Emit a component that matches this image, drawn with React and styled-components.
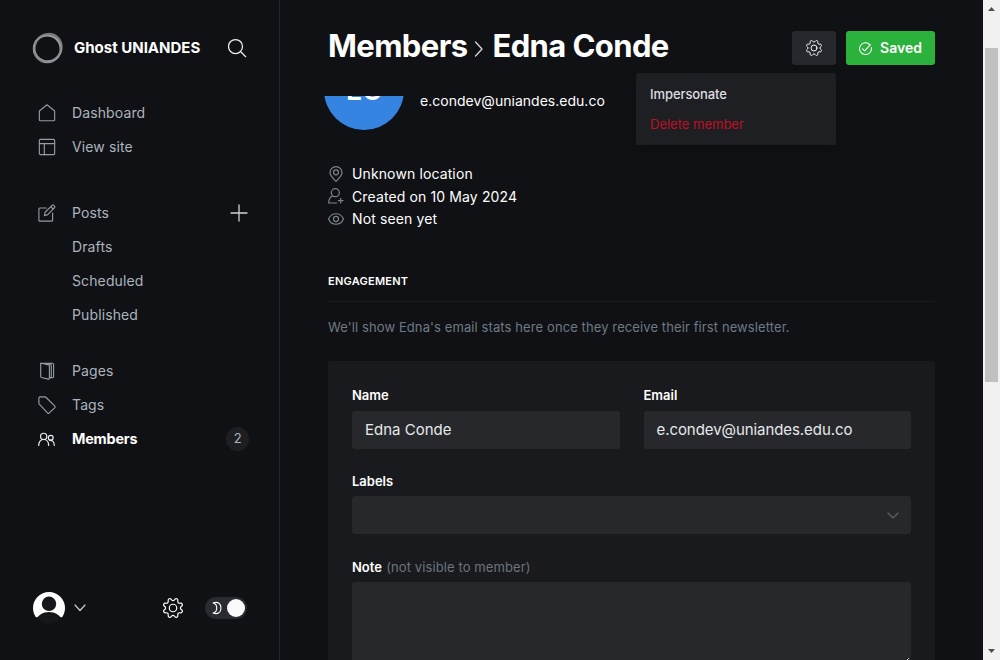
import React from "react";
import styled, { createGlobalStyle, css } from "styled-components";

const Global = createGlobalStyle`
  *, *::before, *::after { box-sizing: border-box; }
  body { margin: 0; background: #101114; font-family: Inter, "Liberation Sans", sans-serif; color: #fff; overflow: hidden; }
  h1, h2, p, ul { margin: 0; padding: 0; }
  button { font: inherit; color: inherit; border: 0; background: none; padding: 0; }
  svg { display: block; flex: none; }
`;

const Shell = styled.div`
  display: flex;
  width: 1000px;
  height: 660px;
  overflow: hidden;
`;

const Sidebar = styled.nav`
  display: flex;
  flex-direction: column;
  flex: none;
  width: 280px;
  padding: 31px 30px 35px 32px;
  border-right: 1px solid #24262b;
`;

const Brand = styled.div`
  display: flex;
  align-items: center;
  height: 34px;
  margin-bottom: 31px;
`;

const BrandName = styled.div`
  flex: 1;
  margin-left: 10px;
  padding-bottom: 1px;
  font-size: 15px;
  font-weight: 700;
  white-space: nowrap;
`;

const NavGroup = styled.ul`
  list-style: none;
  margin-bottom: ${(p) => p.$gap}px;
`;

const NavRow = styled.li`
  display: flex;
  align-items: center;
  height: 34px;
  padding-left: 6px;
  font-size: ${(p) => (p.$active ? 14.4 : 14)}px;
  color: ${(p) => (p.$active ? "#fff" : "#abb4be")};
  font-weight: ${(p) => (p.$active ? 700 : 400)};
  letter-spacing: ${(p) => (p.$active ? "-0.18px" : "0.12px")};
`;

const NavIcon = styled.span`
  width: 34px;
  color: ${(p) => (p.$active ? "#e8eaec" : "#959ca4")};
`;

const NavLabel = styled.span`
  flex: 1;
  padding-bottom: 1px;
`;

const Count = styled.span`
  display: grid;
  place-items: center;
  width: 23px;
  height: 24px;
  padding-bottom: 2px;
  border-radius: 12px;
  background: #1d1e22;
  color: #abb4be;
  font-size: 13px;
  font-weight: 400;
`;

const SidebarFooter = styled.div`
  display: flex;
  align-items: center;
  height: 34px;
  margin-top: auto;
`;

const UserButton = styled.button`
  display: flex;
  align-items: center;
  gap: 9px;
  margin-right: auto;
`;

const Toggle = styled.div`
  display: flex;
  align-items: center;
  justify-content: space-between;
  width: 42px;
  height: 22px;
  margin-left: 22px;
  margin-right: 2px;
  padding: 0 2px 0 7px;
  border-radius: 11px;
  background: #2a2b30;
`;

const Knob = styled.span`
  width: 18px;
  height: 18px;
  border-radius: 50%;
  background: #fafafa;
`;

const Main = styled.main`
  display: flex;
  flex-direction: column;
  flex: 1;
  min-width: 0;
  padding: 0 48px;
`;

const PageHeader = styled.header`
  display: flex;
  align-items: center;
  flex: none;
  height: 96px;
  gap: 10px;
`;

const Title = styled.h1`
  display: flex;
  align-items: center;
  flex: 1;
  padding-bottom: 5px;
  font-size: 31px;
  font-weight: 700;
  letter-spacing: -0.6px;
  white-space: nowrap;
  svg { margin: 7px 9px 0 7px; }
`;

const ActionButton = styled.button`
  display: flex;
  align-items: center;
  justify-content: center;
  gap: 8px;
  width: ${(p) => (p.$primary ? 89 : 44)}px;
  height: 34px;
  border-radius: 3px;
  background: ${(p) => (p.$primary ? "#2ab23c" : "#27282d")};
  font-size: 14px;
  font-weight: 600;
  span { padding-bottom: 1px; }
`;

const MenuAnchor = styled.div`
  position: relative;
`;

const Menu = styled.ul`
  position: absolute;
  z-index: 2;
  top: 42px;
  right: 0;
  width: 200px;
  padding: 6px 0;
  border-radius: 3px;
  background: #1e1f23;
  box-shadow: 0 4px 16px rgba(0, 0, 0, 0.2);
  list-style: none;
`;

const MenuItem = styled.li`
  height: 30px;
  padding-left: 14px;
  font-size: 13px;
  line-height: 30px;
  letter-spacing: ${(p) => (p.$danger ? "0" : "-0.08px")};
  font-weight: ${(p) => (p.$danger ? 400 : 500)};
  color: ${(p) => (p.$danger ? "#be0f24" : "#dcdee0")};
`;

const Content = styled.div`
  flex: 1;
  min-height: 0;
  margin: 0 -8px;
  padding: 0 8px;
  overflow: hidden;
`;

const Profile = styled.section`
  display: flex;
  gap: 16px;
  margin: -46px 0 32.5px -4px;
`;

const Initials = styled.div`
  display: grid;
  place-items: center;
  width: 80px;
  height: 80px;
  border-radius: 50%;
  background: #3684e2;
  font-size: 27px;
  font-weight: 600;
`;

const ProfileEmail = styled.p`
  margin-top: 46px;
  font-size: 14px;
  line-height: 10px;
  letter-spacing: 0.02px;
`;

const Facts = styled.ul`
  list-style: none;
`;

const Fact = styled.li`
  display: flex;
  align-items: center;
  gap: 8px;
  height: 22.5px;
  font-size: 14px;
  letter-spacing: 0.12px;
  svg { color: #7c858e; }
`;

const SectionTitle = styled.h2`
  height: 28px;
  margin-top: 43.5px;
  border-bottom: 1px solid #1a1c20;
  font-size: 11px;
  font-weight: 600;
  line-height: 14px;
  letter-spacing: 0.25px;
  text-transform: uppercase;
`;

const EmptyText = styled.p`
  padding: 15px 0 24px;
  font-size: 13px;
  line-height: 20px;
  letter-spacing: 0.1px;
  color: #6d7a85;
`;

const Form = styled.section`
  display: grid;
  grid-template-columns: 1fr 1fr;
  column-gap: 24px;
  padding: 24px;
  border-radius: 3px;
  background: #191a1d;
`;

const Field = styled.div`
  grid-column: ${(p) => (p.$wide ? "1 / -1" : "auto")};
  margin-bottom: ${(p) => (p.$wide ? 23 : 22)}px;
`;

const Label = styled.div`
  height: ${(p) => p.$h}px;
  padding-top: 2px;
  font-size: 13px;
  font-weight: 600;
  line-height: 16px;
`;

const Hint = styled.span`
  margin-left: 1px;
  color: #6b747e;
  font-weight: 400;
  letter-spacing: 0.1px;
`;

const control = css`
  display: flex;
  align-items: center;
  border-radius: 3px;
  background: #27282c;
  color: #e6e9eb;
`;

const Input = styled.div`
  ${control}
  height: 38px;
  padding: 0 13px;
  font-size: 15px;
  letter-spacing: ${(p) => p.$spacing || "0"};
`;

const Select = styled(Input)`
  justify-content: flex-end;
  padding-top: 2px;
  padding-right: 12px;
  color: #5e6168;
`;

const NoteBox = styled.div`
  ${control}
  align-items: flex-end;
  justify-content: flex-end;
  height: 78px;
  padding-right: 2px;
  border-radius: 3px 3px 0 0;
`;

const Scrollbar = styled.div`
  display: flex;
  flex-direction: column;
  align-items: center;
  justify-content: space-between;
  flex: none;
  width: 17px;
  padding: 7px 0;
  background: #f1f1f1;
`;

const Thumb = styled.div`
  width: 13px;
  height: 334px;
  margin: 37px 0 auto;
  background: #c1c1c1;
`;

function Icon({ size = 18, view = 24, stroke = 1.5, children }) {
  return (
    <svg width={size} height={size} viewBox={`0 0 ${view} ${view}`} fill="none" stroke="currentColor" strokeWidth={stroke} strokeLinecap="round" strokeLinejoin="round">
      {children}
    </svg>
  );
}

const HomeIcon = () => (
  <Icon><path d="M1.8 9.3v11.700q0 1.300 1.300 1.300h17.800q1.300 0 1.300-1.300V9.300L12 1Z" /></Icon>
);
const SiteIcon = () => (
  <Icon><rect x="1.8" y="1.8" width="20.4" height="20.4" rx="1.4" /><path d="M1.800 7.500h20.400M8.400 7.500v14.700" /></Icon>
);
const PostIcon = () => (
  <Icon>
    <path d="M19.5 12v9.500q0 1.300-1.300 1.300H2.500q-1.300 0-1.300-1.300V6.700q0-1.300 1.300-1.300H11" />
    <path d="m8.500 15.500 1-4.500L18.800 1.700q1-1 2 0l1.200 1.200q1 1 0 2L13 14.200ZM17 3.500l3.300 3.300" />
  </Icon>
);
const PagesIcon = () => (
  <Icon>
    <path d="M3.600 1.800v17.400q0 1.200 1.200 1.500l8.800 2.100q1.600.3 1.600-1.200V5.700q0-1.300-1.200-1.600L4.600 1.700" />
    <path d="M3.600 1.600h15.800q1.400 0 1.400 1.400v16.600q0 1.200-1.200 1.200h-4.400M9 2l7.500 1.200q1.200.300 1.200 1.500v16" />
  </Icon>
);
const TagIcon = () => (
  <Icon><path d="M1.200 2.700q0-1.500 1.500-1.500h6.400q1 0 1.800.8l11.300 11.300q1.200 1.200 0 2.400L15 22.600q-1.200 1-2.400 0L2 11.300q-.8-.8-.8-1.800Z" /></Icon>
);
const MembersIcon = () => (
  <Icon size={17} stroke={1.7}>
    <circle cx="8" cy="7.600" r="4.400" /><path d="M1 20.300c0-4.600 2.700-8.300 7-8.300s7 3.700 7 8.300" />
    <circle cx="18" cy="9.600" r="3.400" /><path d="M16.300 13.300c3.800-.8 6.700 2.200 6.700 7" />
  </Icon>
);
const gearPath =
  "M10.546 2.438a1.957 1.957 0 0 0 2.908 0L14.4 1.4a1.959 1.959 0 0 1 3.41 1.413l-.071 1.4a1.958 1.958 0 0 0 2.051 2.054l1.4-.071a1.959 1.959 0 0 1 1.41 3.41l-1.042.94a1.96 1.96 0 0 0 0 2.909l1.042.94a1.959 1.959 0 0 1-1.413 3.41l-1.4-.071a1.958 1.958 0 0 0-2.056 2.056l.071 1.4A1.959 1.959 0 0 1 14.4 22.6l-.941-1.041a1.959 1.959 0 0 0-2.908 0L9.606 22.6A1.959 1.959 0 0 1 6.2 21.192l.072-1.4a1.958 1.958 0 0 0-2.056-2.056l-1.4.071A1.958 1.958 0 0 1 1.4 14.4l1.041-.94a1.96 1.96 0 0 0 0-2.909L1.4 9.606A1.958 1.958 0 0 1 2.809 6.2l1.4.071a1.958 1.958 0 0 0 2.058-2.06L6.2 2.81A1.959 1.959 0 0 1 9.606 1.4Z";
const GearIcon = ({ size, stroke }) => (
  <Icon size={size} stroke={stroke}><path d={gearPath} /><circle cx="12" cy="12" r="4.5" /></Icon>
);
const Chevron = ({ width, height, d, color = "currentColor", stroke = 1.2 }) => (
  <svg width={width} height={height} fill="none" stroke={color} strokeWidth={stroke} strokeLinecap="round" strokeLinejoin="round"><path d={d} /></svg>
);

const Logo = () => (
  <svg width="32" height="32" viewBox="0 0 32 32" fill="none">
    <circle cx="15.200" cy="16.800" r="13.400" stroke="#a4a5a7" strokeWidth="2" />
    <ellipse cx="16.200" cy="15.800" rx="14" ry="13.200" stroke="#77797c" strokeWidth="2.400" transform="rotate(-50 16 16)" />
    <ellipse cx="15.800" cy="16.400" rx="13.600" ry="12.900" stroke="#97989b" strokeWidth="1.200" transform="rotate(20 16 16)" />
  </svg>
);

const Avatar = () => (
  <svg width="33" height="34" viewBox="0 0 33 34">
    <defs><clipPath id="face"><circle cx="17" cy="17" r="16" /></clipPath></defs>
    <g clipPath="url(#face)">
      <path d="M0 0h34v26.500H0Z" fill="#fff" />
      <path d="M0 34V26.500h34V34Z" fill="#15171a" />
      <circle cx="17" cy="12.800" r="7.200" fill="#15171a" />
      <path d="M3 30C6 24 11 21 17 21S28 24 31 30Z" fill="#15171a" />
    </g>
  </svg>
);

const navGroups = [
  { gap: 32, rows: [{ label: "Dashboard", icon: HomeIcon }, { label: "View site", icon: SiteIcon }] },
  { gap: 22, rows: [{ label: "Posts", icon: PostIcon, add: true }, { label: "Drafts" }, { label: "Scheduled" }, { label: "Published" }] },
  { gap: 0, rows: [{ label: "Pages", icon: PagesIcon }, { label: "Tags", icon: TagIcon }, { label: "Members", icon: MembersIcon, active: true, count: 2 }] },
];

export default function App() {
  return (
    <Shell>
      <Global />
      <Sidebar>
        <Brand>
          <Logo />
          <BrandName>Ghost UNIANDES</BrandName>
          <svg width="21" height="20" fill="none" stroke="#f0f1f2" strokeWidth="1.25" strokeLinecap="round">
            <circle cx="7.5" cy="8.500" r="7" /><path d="m12.700 13.700 5 5" />
          </svg>
        </Brand>
        {navGroups.map((group) => (
          <NavGroup key={group.rows[0].label} $gap={group.gap}>
            {group.rows.map(({ label, icon: RowIcon, active, add, count }) => (
              <NavRow key={label} $active={active}>
                <NavIcon $active={active}>{RowIcon && <RowIcon />}</NavIcon>
                <NavLabel>{label}</NavLabel>
                {add && <Chevron width={19} height={18} d="M9 1v16M1 9h16" color="#cfd2d5" stroke={1.3} />}
                {count && <Count>{count}</Count>}
              </NavRow>
            ))}
          </NavGroup>
        ))}
        <SidebarFooter>
          <UserButton>
            <Avatar />
            <Chevron width={12} height={8} d="m1 1 5 5.500L11 1" color="#c8ccd0" />
          </UserButton>
          <GearIcon size={20} stroke={1.4} />
          <Toggle>
            <svg width="10" height="14" fill="none" stroke="#fff" strokeWidth="1.100" strokeLinejoin="round">
              <path d="M1 2c5-2 8 1 8 5s-3 7-8 5c5-1 5-9 0-10Z" />
            </svg>
            <Knob />
          </Toggle>
        </SidebarFooter>
      </Sidebar>
      <Main>
        <PageHeader>
          <Title>
            <span>Members</span>
            <Chevron width={9} height={16} d="m1.500 1 6.500 7-6.500 7" color="#d5d7d9" stroke={1.3} />
            <span>Edna Conde</span>
          </Title>
          <MenuAnchor>
            <ActionButton><GearIcon size={16} stroke={1.4} /></ActionButton>
            <Menu>
              <MenuItem>Impersonate</MenuItem>
              <MenuItem $danger>Delete member</MenuItem>
            </Menu>
          </MenuAnchor>
          <ActionButton $primary>
            <Icon size={13} stroke={1.9}>
              <path d="M20.500 5.200A11 11 0 1 0 22.800 10" /><path d="m6.500 12.500 4 4L21 5" />
            </Icon>
            <span>Saved</span>
          </ActionButton>
        </PageHeader>
        <Content>
          <Profile>
            <Initials>EC</Initials>
            <ProfileEmail>e.condev@uniandes.edu.co</ProfileEmail>
          </Profile>
          <Facts>
            <Fact>
              <Icon size={16} stroke={1.8}><path d="M12 23c-4-4-9-8.500-9-13a9 9 0 0 1 18 0c0 4.500-5 9-9 13Z" /><circle cx="12" cy="9.500" r="3.800" /></Icon>
              Unknown location
            </Fact>
            <Fact>
              <Icon size={16} stroke={1.8}><circle cx="11" cy="7" r="6" /><path d="M7 12c-4 1.500-6 4.500-6 10.500h12M19 15.500v7M15.500 19h7" /></Icon>
              Created on 10 May 2024
            </Fact>
            <Fact>
              <Icon size={16} stroke={1.8}><path d="M.8 12C5 1.500 19 1.500 23.200 12 19 22.500 5 22.500 .8 12Z" /><circle cx="12" cy="12" r="3.800" /></Icon>
              Not seen yet
            </Fact>
          </Facts>
          <SectionTitle>Engagement</SectionTitle>
          <EmptyText>We'll show Edna's email stats here once they receive their first newsletter.</EmptyText>
          <Form>
            <Field><Label $h={26}>Name</Label><Input>Edna Conde</Input></Field>
            <Field><Label $h={26}>Email</Label><Input $spacing="-0.07px">e.condev@uniandes.edu.co</Input></Field>
            <Field $wide>
              <Label $h={25}>Labels</Label>
              <Select><Chevron width={12} height={8} d="m1 1 5 5 5-5" /></Select>
            </Field>
            <Field $wide>
              <Label $h={25}>Note <Hint>(not visible to member)</Hint></Label>
              <NoteBox>
                <svg width="3" height="3"><path d="M0 2.500 2.500 0" stroke="#0c0c0d" /><path d="M1 3 3 1" stroke="#c8c8c8" /></svg>
              </NoteBox>
            </Field>
          </Form>
        </Content>
      </Main>
      <Scrollbar>
        <svg width="7" height="4" fill="#505050"><path d="M0 4 3.500 0 7 4Z" /></svg>
        <Thumb />
        <svg width="7" height="4" fill="#505050"><path d="M0 0h7L3.500 4Z" /></svg>
      </Scrollbar>
    </Shell>
  );
}
